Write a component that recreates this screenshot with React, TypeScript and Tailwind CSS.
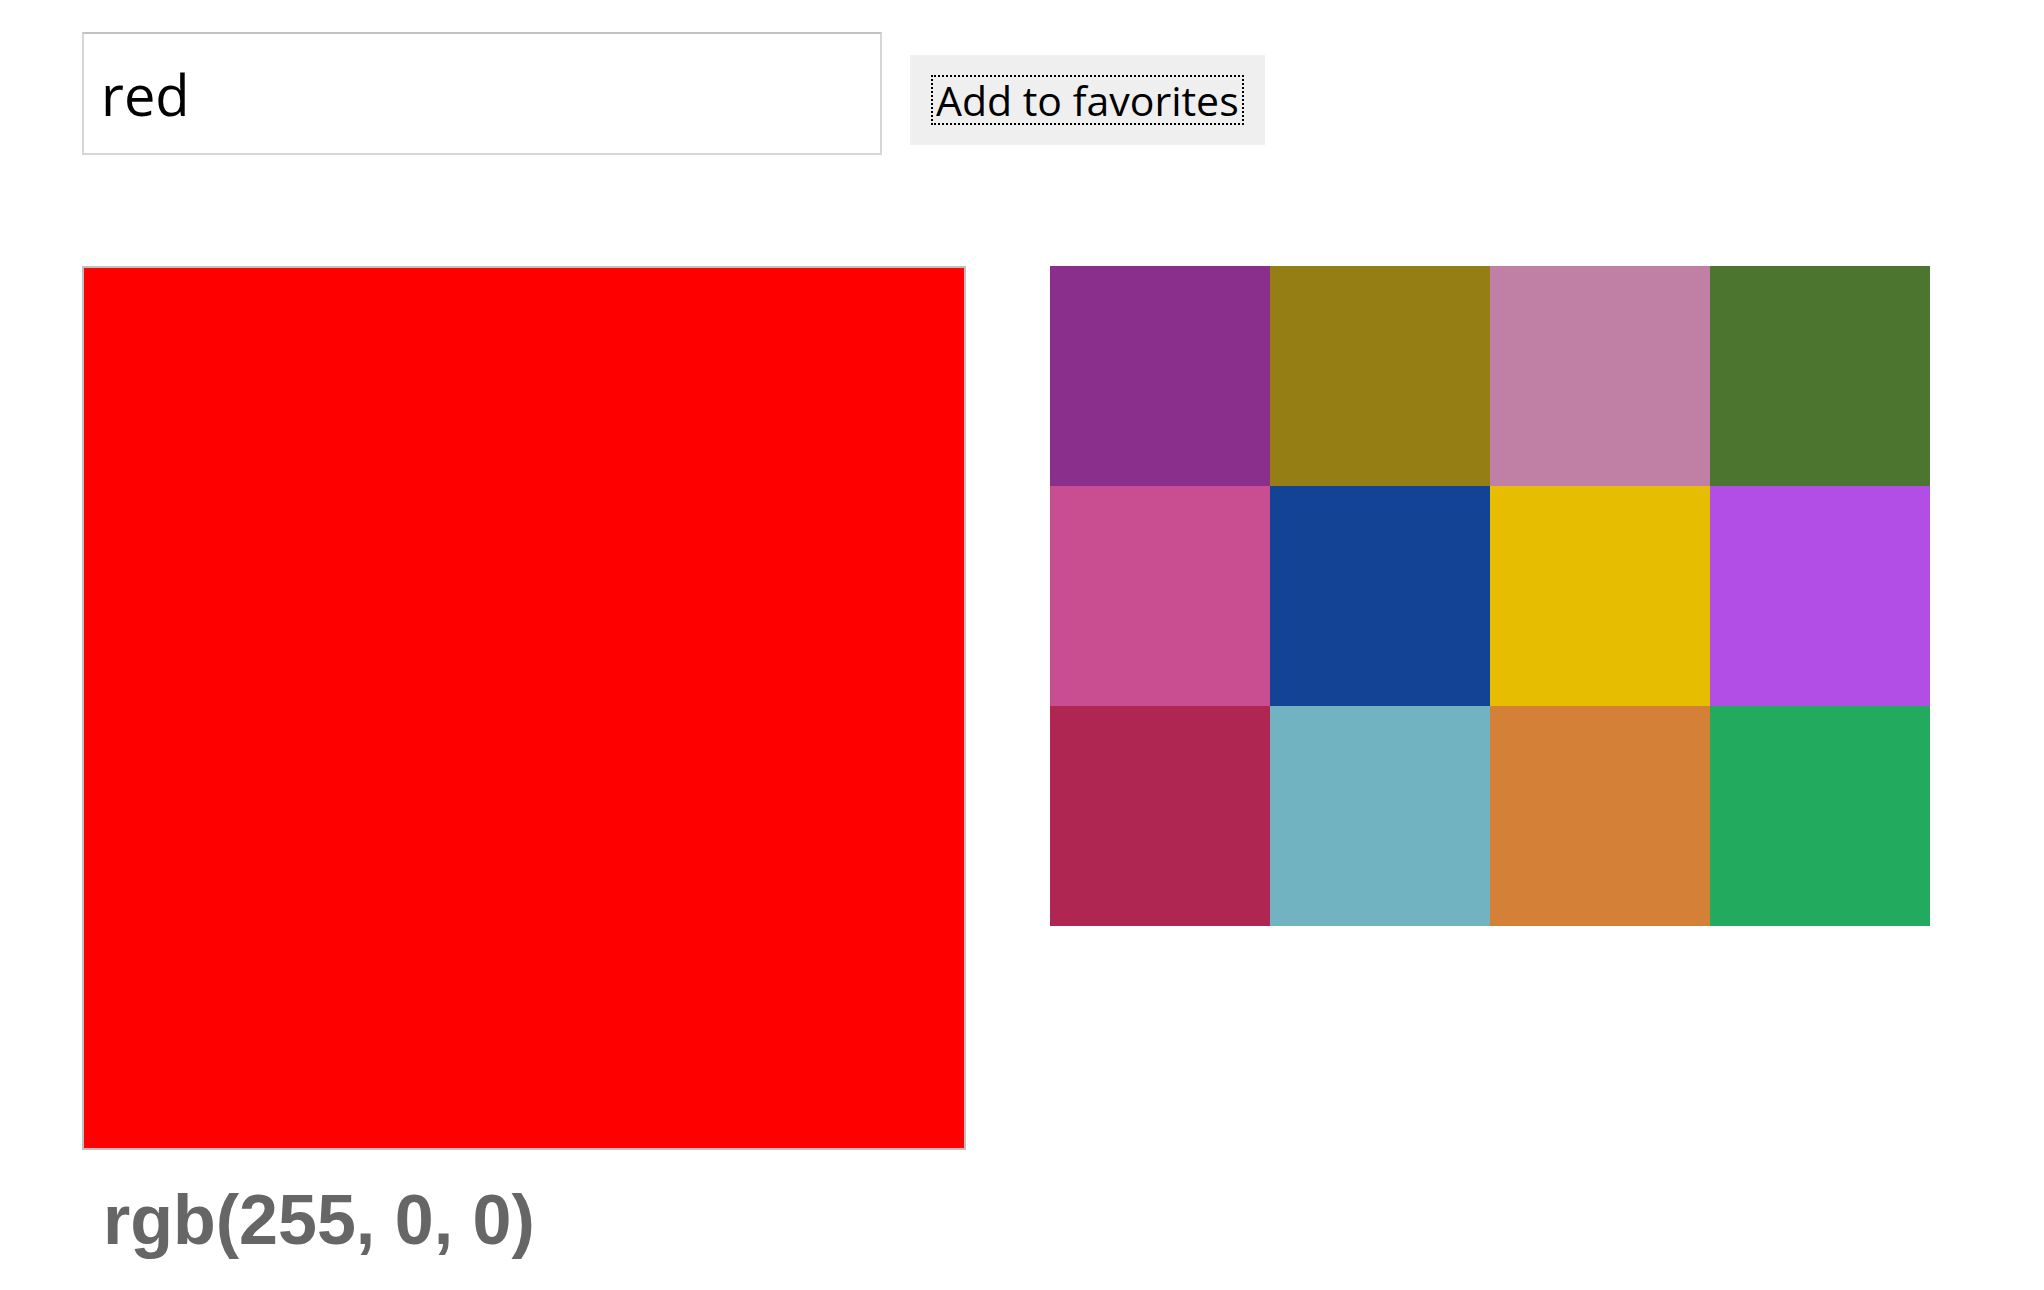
import { useState } from "react";

const favorites = [
  "#8b2f8d",
  "#957e14",
  "#c080a6",
  "#4c762f",
  "#c94e91",
  "#124395",
  "#e6bd00",
  "#b24de6",
  "#af2652",
  "#72b3c1",
  "#d48137",
  "#22ab5e",
];

export default function App() {
  const [color, setColor] = useState("red");

  return (
    <div className="min-h-screen bg-white pl-[82px] pt-[32px]">
      <div className="flex items-start">
        <input
          value={color}
          onChange={(e) => setColor(e.target.value)}
          className="w-[800px] h-[123px] border-2 border-[#d6d6d6] border-t-[#c2c2c2] bg-white pl-[17px] text-[56px] text-black outline-none font-['Open_Sans',sans-serif]"
        />
        <button className="ml-[28px] mt-[23px] bg-[#efefef] px-[21px] py-[20px] text-black font-['Open_Sans',sans-serif]">
          <span className="block border-2 border-dotted border-black px-[3px] text-[41px] leading-[46px]">
            Add to favorites
          </span>
        </button>
      </div>

      <div className="mt-[111px] flex items-start gap-[84px]">
        <div>
          <div className="w-[884px] h-[884px] border-2 border-[#c0c0c0] bg-[#ff0000]" />
          <div className="mt-[30px] pl-[21px] text-[70px] leading-[80px] font-bold text-[#666666] font-['Liberation_Sans',Arial,sans-serif]">
            rgb(255, 0, 0)
          </div>
        </div>

        <div className="grid grid-cols-4 w-[880px]">
          {favorites.map((c) => (
            <div
              key={c}
              className="h-[220px] cursor-pointer"
              style={{ backgroundColor: c }}
            />
          ))}
        </div>
      </div>
    </div>
  );
}
